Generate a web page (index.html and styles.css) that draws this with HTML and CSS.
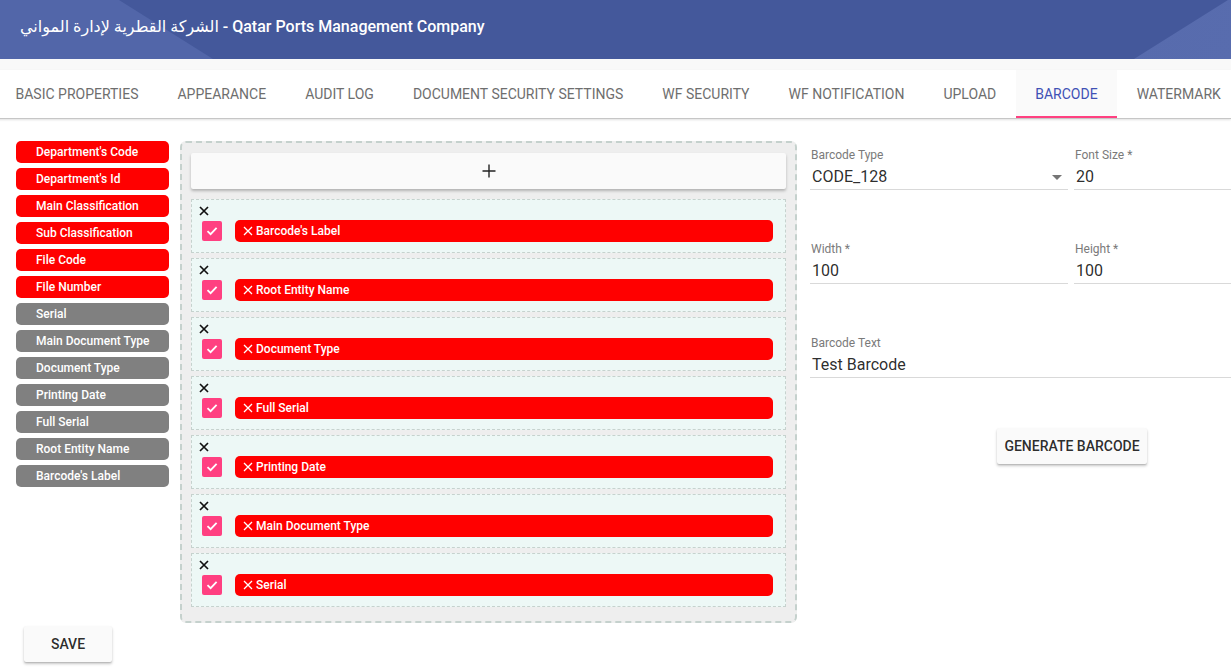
FILE: index.html
```html
<!DOCTYPE html>
<html lang="en">
<head>
<meta charset="utf-8">
<title>Barcode</title>
<link rel="stylesheet" href="styles.css">
</head>
<body>
<header class="appbar">
  <h1 class="title">الشركة القطرية لإدارة المواني - Qatar Ports Management Company</h1>
</header>
<div class="tabs-strip"></div>
<nav class="tabs">
  <div class="tab">Basic Properties</div>
  <div class="tab">Appearance</div>
  <div class="tab">Audit Log</div>
  <div class="tab">Document Security Settings</div>
  <div class="tab">WF Security</div>
  <div class="tab">WF Notification</div>
  <div class="tab">Upload</div>
  <div class="tab active">Barcode</div>
  <div class="tab">Watermark</div>
</nav>
<main class="content">
  <div class="workspace">
    <aside class="fields">
      <div class="chip red">Department's Code</div>
      <div class="chip red">Department's Id</div>
      <div class="chip red">Main Classification</div>
      <div class="chip red">Sub Classification</div>
      <div class="chip red">File Code</div>
      <div class="chip red">File Number</div>
      <div class="chip gray">Serial</div>
      <div class="chip gray">Main Document Type</div>
      <div class="chip gray">Document Type</div>
      <div class="chip gray">Printing Date</div>
      <div class="chip gray">Full Serial</div>
      <div class="chip gray">Root Entity Name</div>
      <div class="chip gray">Barcode's Label</div>
    </aside>

    <section class="canvas">
      <div class="add-panel">
        <svg width="14" height="14" viewBox="0 0 14 14"><path d="M7 0.5V13.5M0.5 7H13.5" stroke="#222" stroke-width="1.4"/></svg>
      </div>
      <div class="row">
        <svg class="row-close" width="10" height="10" viewBox="0 0 10 10"><path d="M1 1L9 9M9 1L1 9" stroke="#111" stroke-width="1.7"/></svg>
        <div class="row-line">
          <span class="check"><svg width="14" height="14" viewBox="0 0 14 14"><path d="M2.5 7.2L5.6 10.2L11.6 3.8" fill="none" stroke="#fff" stroke-width="1.8"/></svg></span>
          <div class="row-chip"><svg width="10" height="10" viewBox="0 0 10 10"><path d="M1 1L9 9M9 1L1 9" stroke="#fff" stroke-width="1.3"/></svg>Barcode's Label</div>
        </div>
      </div>
      <div class="row">
        <svg class="row-close" width="10" height="10" viewBox="0 0 10 10"><path d="M1 1L9 9M9 1L1 9" stroke="#111" stroke-width="1.7"/></svg>
        <div class="row-line">
          <span class="check"><svg width="14" height="14" viewBox="0 0 14 14"><path d="M2.5 7.2L5.6 10.2L11.6 3.8" fill="none" stroke="#fff" stroke-width="1.8"/></svg></span>
          <div class="row-chip"><svg width="10" height="10" viewBox="0 0 10 10"><path d="M1 1L9 9M9 1L1 9" stroke="#fff" stroke-width="1.3"/></svg>Root Entity Name</div>
        </div>
      </div>
      <div class="row">
        <svg class="row-close" width="10" height="10" viewBox="0 0 10 10"><path d="M1 1L9 9M9 1L1 9" stroke="#111" stroke-width="1.7"/></svg>
        <div class="row-line">
          <span class="check"><svg width="14" height="14" viewBox="0 0 14 14"><path d="M2.5 7.2L5.6 10.2L11.6 3.8" fill="none" stroke="#fff" stroke-width="1.8"/></svg></span>
          <div class="row-chip"><svg width="10" height="10" viewBox="0 0 10 10"><path d="M1 1L9 9M9 1L1 9" stroke="#fff" stroke-width="1.3"/></svg>Document Type</div>
        </div>
      </div>
      <div class="row">
        <svg class="row-close" width="10" height="10" viewBox="0 0 10 10"><path d="M1 1L9 9M9 1L1 9" stroke="#111" stroke-width="1.7"/></svg>
        <div class="row-line">
          <span class="check"><svg width="14" height="14" viewBox="0 0 14 14"><path d="M2.5 7.2L5.6 10.2L11.6 3.8" fill="none" stroke="#fff" stroke-width="1.8"/></svg></span>
          <div class="row-chip"><svg width="10" height="10" viewBox="0 0 10 10"><path d="M1 1L9 9M9 1L1 9" stroke="#fff" stroke-width="1.3"/></svg>Full Serial</div>
        </div>
      </div>
      <div class="row">
        <svg class="row-close" width="10" height="10" viewBox="0 0 10 10"><path d="M1 1L9 9M9 1L1 9" stroke="#111" stroke-width="1.7"/></svg>
        <div class="row-line">
          <span class="check"><svg width="14" height="14" viewBox="0 0 14 14"><path d="M2.5 7.2L5.6 10.2L11.6 3.8" fill="none" stroke="#fff" stroke-width="1.8"/></svg></span>
          <div class="row-chip"><svg width="10" height="10" viewBox="0 0 10 10"><path d="M1 1L9 9M9 1L1 9" stroke="#fff" stroke-width="1.3"/></svg>Printing Date</div>
        </div>
      </div>
      <div class="row">
        <svg class="row-close" width="10" height="10" viewBox="0 0 10 10"><path d="M1 1L9 9M9 1L1 9" stroke="#111" stroke-width="1.7"/></svg>
        <div class="row-line">
          <span class="check"><svg width="14" height="14" viewBox="0 0 14 14"><path d="M2.5 7.2L5.6 10.2L11.6 3.8" fill="none" stroke="#fff" stroke-width="1.8"/></svg></span>
          <div class="row-chip"><svg width="10" height="10" viewBox="0 0 10 10"><path d="M1 1L9 9M9 1L1 9" stroke="#fff" stroke-width="1.3"/></svg>Main Document Type</div>
        </div>
      </div>
      <div class="row">
        <svg class="row-close" width="10" height="10" viewBox="0 0 10 10"><path d="M1 1L9 9M9 1L1 9" stroke="#111" stroke-width="1.7"/></svg>
        <div class="row-line">
          <span class="check"><svg width="14" height="14" viewBox="0 0 14 14"><path d="M2.5 7.2L5.6 10.2L11.6 3.8" fill="none" stroke="#fff" stroke-width="1.8"/></svg></span>
          <div class="row-chip"><svg width="10" height="10" viewBox="0 0 10 10"><path d="M1 1L9 9M9 1L1 9" stroke="#fff" stroke-width="1.3"/></svg>Serial</div>
        </div>
      </div>
    </section>

    <section class="form">
      <div class="form-grid">
        <div class="field">
          <label class="field-label">Barcode Type</label>
          <div class="field-value select">CODE_128<span class="caret"></span></div>
        </div>
        <div class="field">
          <label class="field-label">Font Size *</label>
          <div class="field-value">20</div>
        </div>
        <div class="field">
          <label class="field-label">Width *</label>
          <div class="field-value">100</div>
        </div>
        <div class="field">
          <label class="field-label">Height *</label>
          <div class="field-value">100</div>
        </div>
        <div class="field wide">
          <label class="field-label">Barcode Text</label>
          <div class="field-value">Test Barcode</div>
        </div>
      </div>
      <div class="form-actions">
        <button class="btn generate">Generate Barcode</button>
      </div>
    </section>
  </div>
  <div class="actions">
    <button class="btn save">Save</button>
  </div>
</main>
</body>
</html>
```

FILE: styles.css
```css
html, body {
  margin: 0;
  padding: 0;
  overflow: hidden;
  background: #fff;
}
body {
  font-family: Roboto, "Liberation Sans", "DejaVu Sans", sans-serif;
  color: rgba(0,0,0,.87);
  width: 1231px;
  height: 672px;
}

/* header */
.appbar {
  position: relative;
  height: 59px;
  background: #44589b;
  display: flex;
  align-items: center;
  overflow: hidden;
}
.appbar::before {
  content: "";
  position: absolute;
  inset: 0;
  background: #5266a9;
  clip-path: polygon(0 0, 119px 0, 213px 100%, 0 100%);
}
.appbar::after {
  content: "";
  position: absolute;
  inset: 0;
  background: linear-gradient(120deg, #4c60a3 0%, #586cae 100%);
  clip-path: polygon(1228px 0, 100% 0, 100% 100%, 1134px 100%);
}
.title {
  position: relative;
  z-index: 1;
  margin: 0 0 7px 20px;
  font-size: 16px;
  font-weight: 500;
  color: #fff;
  font-family: Roboto, "DejaVu Sans", sans-serif;
  white-space: nowrap;
}

/* tabs */
.tabs-strip {
  height: 11px;
  background: #f9f9f9;
}
.tabs {
  display: flex;
  height: 48px;
  background: #fff;
  border-bottom: 1px solid #c6c6c6;
  box-shadow: 0 1px 2px rgba(0,0,0,.12);
  margin-left: -4px;
  overflow: hidden;
}
.tab {
  display: flex;
  align-items: center;
  padding: 0 19.5px;
  font-size: 14px;
  text-transform: uppercase;
  color: #6e6e6e;
  white-space: nowrap;
  box-sizing: border-box;
}
.tab.active {
  background: #fafafa;
  color: #3f51b5;
  box-shadow: inset 0 -2px 0 #ff4081;
}

/* content */
.workspace {
  display: flex;
  align-items: flex-start;
  padding: 22px 0 0 16px;
}
.fields {
  flex: 0 0 153px;
  display: flex;
  flex-direction: column;
  gap: 5px;
  margin-right: 11px;
}
.chip {
  height: 22px;
  line-height: 22px;
  border-radius: 5px;
  padding-left: 20px;
  font-size: 12px;
  font-weight: 500;
  color: #fff;
  white-space: nowrap;
}
.chip.red { background: #ff0000; }
.chip.gray { background: #808080; }

.canvas {
  flex: 0 0 617px;
  box-sizing: border-box;
  border: 2px dashed #c5d1cd;
  border-radius: 6px;
  background: #eeeeee;
  padding: 10px 9px 14px 9px;
  margin-right: 13px;
  display: flex;
  flex-direction: column;
  gap: 5px;
}
.add-panel {
  height: 36px;
  background: #fafafa;
  border-radius: 2px;
  box-shadow: 0 2px 3px rgba(0,0,0,.25);
  display: flex;
  align-items: center;
  justify-content: center;
  margin-bottom: 5px;
}
.row {
  height: 54px;
  box-sizing: border-box;
  border: 1px dashed #c6d2ce;
  background: #edf8f6;
  padding: 6px 12px 0 7px;
  display: flex;
  flex-direction: column;
}
.row-close {
  display: block;
  flex: 0 0 auto;
}
.row-line {
  display: flex;
  align-items: center;
  margin-top: 4px;
}
.check {
  width: 20px;
  height: 20px;
  border-radius: 2px;
  background: #ff4081;
  margin-left: 3px;
  display: flex;
  align-items: center;
  justify-content: center;
}
.check svg { display: block; }
.row-chip {
  flex: 1;
  margin-left: 13px;
  height: 22px;
  border-radius: 5px;
  background: #ff0000;
  color: #fff;
  font-size: 12px;
  font-weight: 500;
  display: flex;
  align-items: center;
  padding-left: 8px;
  gap: 3px;
}

/* form */
.form {
  flex: 1 1 auto;
  min-width: 0;
  padding-top: 7px;
}
.form-grid {
  display: grid;
  grid-template-columns: 258px 1fr;
  column-gap: 6px;
  row-gap: 52px;
}
.field.wide { grid-column: 1 / 3; }
.field-label {
  display: block;
  font-size: 12px;
  line-height: 14px;
  color: #7a7a7a;
  padding-left: 1px;
}
.field-value {
  position: relative;
  margin-top: 5px;
  font-size: 16px;
  line-height: 20px;
  padding: 0 0 2px 2px;
  border-bottom: 1px solid #d9d9d9;
  color: rgba(0,0,0,.84);
}
.caret {
  position: absolute;
  right: 6px;
  top: 8px;
  width: 0;
  height: 0;
  border-left: 5px solid transparent;
  border-right: 5px solid transparent;
  border-top: 5px solid #757575;
}
.form-actions {
  display: flex;
  justify-content: center;
  padding-left: 103px;
  margin-top: 50px;
}

/* buttons */
.btn {
  height: 36px;
  min-width: 88px;
  padding: 0 8px;
  border: none;
  border-radius: 2px;
  background: #fafafa;
  box-shadow: 0 2px 3px rgba(0,0,0,.22), 0 1px 1px rgba(0,0,0,.1);
  font-family: Roboto, "Liberation Sans", sans-serif;
  font-size: 14px;
  font-weight: 500;
  color: rgba(0,0,0,.84);
  text-transform: uppercase;
  white-space: nowrap;
}
.btn.generate { width: 150px; padding: 0; }
.actions {
  padding: 3px 0 0 24px;
}
```
